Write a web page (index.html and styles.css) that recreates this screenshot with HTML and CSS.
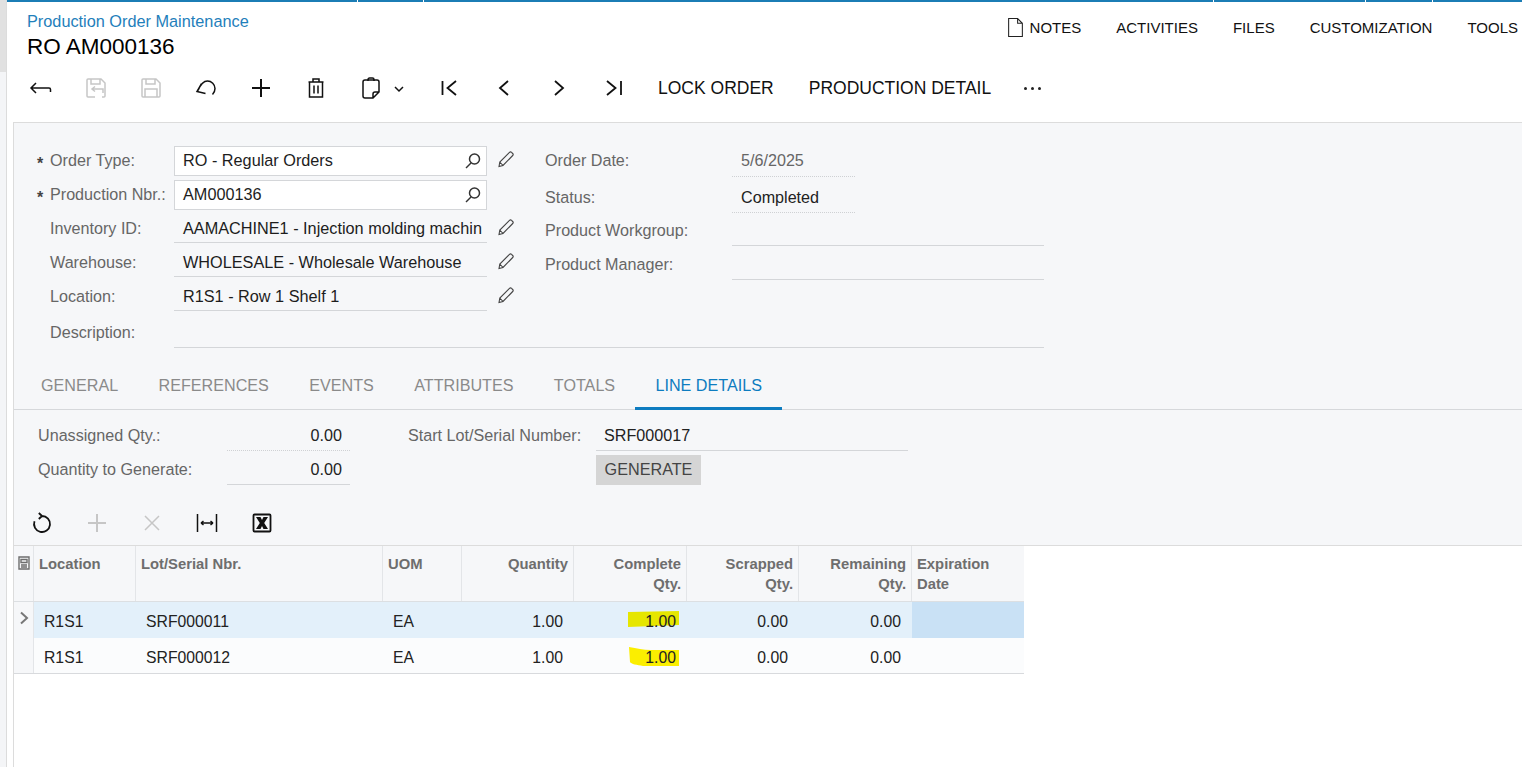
FILE: index.html
```html
<!DOCTYPE html>
<html lang="en">
<head>
<meta charset="utf-8">
<title>Production Order Maintenance</title>
<link rel="stylesheet" href="styles.css">
</head>
<body>
<div class="app">
  <div class="rail"><div class="rail-top"></div></div>
  <div class="main">
    <div class="topline"><i class="s1"></i><i class="s2"></i><i class="s3"></i><i class="s4"></i><i class="s5"></i><i class="s6"></i></div>
    <header class="head">
      <div class="titles">
        <div class="crumb">Production Order Maintenance</div>
        <div class="title">RO AM000136</div>
      </div>
      <nav class="links">
        <span class="link note-link"><svg class="note-ic" viewBox="0 0 16 18"><path d="M1.500 .5H10L14.500 5V17.500H1.500Z M10 .5V5H14.500"/></svg>NOTES</span>
        <span class="link">ACTIVITIES</span>
        <span class="link">FILES</span>
        <span class="link">CUSTOMIZATION</span>
        <span class="link">TOOLS</span>
      </nav>
    </header>
    <div class="toolbar">
      <span class="tb"><svg class="ic" viewBox="0 0 24 24"><path d="M7 7 2 12l5 5M2 12h18c1 0 1.500 .6 1.500 1.500V16"/></svg></span>
      <span class="tb off"><svg class="ic" viewBox="0 0 24 24"><path d="M9 21H4a1 1 0 0 1-1-1V4a1 1 0 0 1 1-1h13l4 4v13a1 1 0 0 1-1 1h-2M7 3v5h9V3M9 13h10v4M11 10.500l-3 2.500 3 2.500M8 21h3"/></svg></span>
      <span class="tb off"><svg class="ic" viewBox="0 0 24 24"><path d="M4 3h13l4 4v13a1 1 0 0 1-1 1H4a1 1 0 0 1-1-1V4a1 1 0 0 1 1-1ZM7 3v5h9V3M6 21v-8h12v8"/></svg></span>
      <span class="tb"><svg class="ic" viewBox="0 0 24 24"><path d="M7.500 7.500 3 15.500l8.500 2M4 14.500C6.500 8.500 9.500 5 13.500 5c4 0 7.500 3.500 7.500 7.500 0 2.500-1 4.500-2.500 6"/></svg></span>
      <span class="tb"><svg class="ic ic-b" viewBox="0 0 24 24"><path d="M12 3v18M3 12h18"/></svg></span>
      <span class="tb"><svg class="ic" viewBox="0 0 24 24"><path d="M4.500 6h15M9 6V3h6v3M5.500 6.500V21h13V6.500M10 9.500v8M14 9.500v8"/></svg></span>
      <span class="tb-split"><svg class="ic" viewBox="0 0 24 24"><path d="M9 5V3.500c0-.8.600-1.500 1.500-1.500h3c.9 0 1.500 .7 1.500 1.500V5M6 4h12c1 0 2 1 2 2v10l-6 6H6c-1 0-2-1-2-2V6c0-1 1-2 2-2ZM14 22v-4c0-1 1-2 2-2h4"/></svg><svg class="chev" viewBox="0 0 12 12"><path d="M2 4l4 4 4-4"/></svg></span>
      <span class="tb"><svg class="ic ic-t" viewBox="0 0 24 24"><path d="M5.500 5v14M19 5l-8.500 7 8.500 7"/></svg></span>
      <span class="tb"><svg class="ic ic-t" viewBox="0 0 24 24"><path d="M16 5l-8 7 8 7"/></svg></span>
      <span class="tb"><svg class="ic ic-t" viewBox="0 0 24 24"><path d="M8 5l8 7-8 7"/></svg></span>
      <span class="tb"><svg class="ic ic-t" viewBox="0 0 24 24"><path d="M19 5v14M5 5l8.500 7L5 19"/></svg></span>
      <span class="tbtext first">LOCK ORDER</span>
      <span class="tbtext">PRODUCTION DETAIL</span>
      <span class="more"><i></i><i></i><i></i></span>
    </div>

    <div class="content">
      <section class="panel">
        <div class="form">
          <div class="fcol-left">
            <div class="frow"><span class="star">*</span><label class="lbl">Order Type:</label><div class="field box">RO - Regular Orders<svg class="search" viewBox="0 0 18 18"><circle cx="10.500" cy="7" r="5"/><path d="M7 11 2 16"/></svg></div><svg class="pencil" viewBox="0 0 18 18"><path d="M2 16.500l.8-4.500L12.500 2.300c.6-.6 1.500-.6 2 0l1.200 1.200c.6.600.6 1.400 0 2L6 15.500ZM2.800 12 6 15.500"/></svg></div>
            <div class="frow"><span class="star">*</span><label class="lbl">Production Nbr.:</label><div class="field box">AM000136<svg class="search" viewBox="0 0 18 18"><circle cx="10.500" cy="7" r="5"/><path d="M7 11 2 16"/></svg></div></div>
            <div class="frow"><span class="star"></span><label class="lbl">Inventory ID:</label><div class="field line">AAMACHINE1 - Injection molding machin</div><svg class="pencil" viewBox="0 0 18 18"><path d="M2 16.500l.8-4.500L12.500 2.300c.6-.6 1.500-.6 2 0l1.200 1.200c.6.600.6 1.400 0 2L6 15.500ZM2.800 12 6 15.500"/></svg></div>
            <div class="frow"><span class="star"></span><label class="lbl">Warehouse:</label><div class="field line">WHOLESALE - Wholesale Warehouse</div><svg class="pencil" viewBox="0 0 18 18"><path d="M2 16.500l.8-4.500L12.500 2.300c.6-.6 1.500-.6 2 0l1.200 1.200c.6.600.6 1.400 0 2L6 15.500ZM2.800 12 6 15.500"/></svg></div>
            <div class="frow"><span class="star"></span><label class="lbl">Location:</label><div class="field line">R1S1 - Row 1 Shelf 1</div><svg class="pencil" viewBox="0 0 18 18"><path d="M2 16.500l.8-4.500L12.500 2.300c.6-.6 1.500-.6 2 0l1.200 1.200c.6.600.6 1.400 0 2L6 15.500ZM2.800 12 6 15.500"/></svg></div>
          </div>
          <div class="fcol-right">
            <div class="rrow"><label class="rlbl">Order Date:</label><div class="rval dotted muted">5/6/2025</div></div>
            <div class="rrow r2"><label class="rlbl">Status:</label><div class="rval dotted">Completed</div></div>
            <div class="rrow r3"><label class="rlbl">Product Workgroup:</label><div class="rval wide"></div></div>
            <div class="rrow r4"><label class="rlbl">Product Manager:</label><div class="rval wide"></div></div>
          </div>
        </div>
        <div class="desc"><span class="star"></span><label class="lbl">Description:</label><div class="desc-val"></div></div>

        <div class="tabs">
          <span class="tab">GENERAL</span>
          <span class="tab">REFERENCES</span>
          <span class="tab">EVENTS</span>
          <span class="tab">ATTRIBUTES</span>
          <span class="tab">TOTALS</span>
          <span class="tab active">LINE DETAILS</span>
        </div>

        <div class="ld">
          <div class="ld-a">
            <div class="ldrow"><label class="ld-lbl">Unassigned Qty.:</label><div class="ld-num dotted">0.00</div></div>
            <div class="ldrow"><label class="ld-lbl">Quantity to Generate:</label><div class="ld-num solid">0.00</div></div>
          </div>
          <div class="ld-b">
            <div class="ldrow"><label class="ld-lbl">Start Lot/Serial Number:</label><div class="ld-text">SRF000017</div></div>
            <div class="ldrow"><span class="ld-lbl"></span><span class="gen">GENERATE</span></div>
          </div>
        </div>

        <div class="gridbar">
          <span class="tb"><svg class="ic ic-t" viewBox="0 0 24 24"><path d="M12 5a8 8 0 1 1-7.500 5.300M12 5 8.800 2M12 5 8.800 8"/></svg></span>
          <span class="tb off"><svg class="ic ic-b" viewBox="0 0 24 24"><path d="M12 3v18M3 12h18"/></svg></span>
          <span class="tb off"><svg class="ic" viewBox="0 0 24 24"><path d="M5 5l14 14M19 5 5 19"/></svg></span>
          <span class="tb"><svg class="ic" viewBox="0 0 24 24"><path d="M2.500 3v18M21.500 3v18M6 12h12M6 12l2.500-2M6 12l2.500 2M18 12l-2.500-2M18 12l-2.500 2"/></svg></span>
          <span class="tb"><svg class="ic ic-t" viewBox="0 0 24 24"><rect x="3.500" y="3.500" width="17" height="17" rx="1"/><path class="xl" d="M6 6h4.500l1.500 3 1.500-3H18l-3.800 6 3.800 6h-4.500L12 15l-1.500 3H6l3.800-6Z"/></svg></span>
        </div>
      </section>

      <section class="grid">
        <div class="grow ghead">
          <div class="gc sel"><svg class="colic" viewBox="0 0 14 14"><path d="M2 1h10v12H2ZM4 3.500h6v3H4ZM4 9h6M4 11h6"/></svg></div>
          <div class="gc">Location</div>
          <div class="gc">Lot/Serial Nbr.</div>
          <div class="gc">UOM</div>
          <div class="gc r">Quantity</div>
          <div class="gc r">Complete<br>Qty.</div>
          <div class="gc r">Scrapped<br>Qty.</div>
          <div class="gc r">Remaining<br>Qty.</div>
          <div class="gc">Expiration<br>Date</div>
        </div>
        <div class="grow gbody row-a">
          <div class="gc sel"><svg class="rowarrow" viewBox="0 0 10 14"><path d="M2 1.500 8 7l-6 5.500"/></svg></div>
          <div class="gc">R1S1</div>
          <div class="gc">SRF000011</div>
          <div class="gc">EA</div>
          <div class="gc r">1.00</div>
          <div class="gc r hl-cell"><svg class="mark mark-a" viewBox="0 0 52 16"><path d="M1 1 52 0V14L1 16Z"/></svg>1.00</div>
          <div class="gc r">0.00</div>
          <div class="gc r">0.00</div>
          <div class="gc cur"></div>
        </div>
        <div class="grow gbody row-b">
          <div class="gc sel"></div>
          <div class="gc">R1S1</div>
          <div class="gc">SRF000012</div>
          <div class="gc">EA</div>
          <div class="gc r">1.00</div>
          <div class="gc r hl-cell"><svg class="mark mark-b" viewBox="0 0 50 19"><path d="M0 0C8 1 14 3 22 3H50V19H14C8 18 2 17 1 15Z"/></svg>1.00</div>
          <div class="gc r">0.00</div>
          <div class="gc r">0.00</div>
          <div class="gc"></div>
        </div>
      </section>
    </div>
  </div>
</div>
</body>
</html>
```
FILE: styles.css
```css
* { box-sizing: border-box; }
html, body { margin: 0; height: 767px; overflow: hidden; background: #fff; }
body { font-family: "Liberation Sans", Arial, sans-serif; font-size: 16.15px; color: #222; }
.app { display: flex; height: 767px; }
.rail { width: 7px; background: #f4f5f7; border-right: 1px solid #dcdcdc; flex: none; }
.rail-top { height: 72px; background: #e1e1e1; }
.main { flex: 1; min-width: 0; padding-left: 6px; display: flex; flex-direction: column; }

.topline { display: flex; gap: 1px; height: 2px; margin-left: -6px; flex: none; }
.topline i { display: block; background: #1b7db5; height: 100%; }
.s1 { width: 350px; } .s2 { width: 65px; } .s3 { width: 789px; }
.s4 { width: 151px; } .s5 { width: 66px; } .s6 { flex: 1; }

.head { display: flex; justify-content: space-between; height: 58px; padding-left: 14px; flex: none; }
.titles { padding-top: 10px; }
.crumb { font-size: 16.3px; line-height: 18px; color: #1f80bb; }
.title { font-size: 22.5px; line-height: 28px; color: #000; margin-top: 3px; }
.links { display: flex; gap: 35px; padding-top: 17px; padding-right: 4px; font-size: 15px; color: #111; }
.link { line-height: 17px; }
.note-link { display: flex; align-items: flex-start; gap: 6px; }
.note-ic { width: 17px; height: 19px; fill: none; stroke: #222; stroke-width: 1; margin-top: -1px; }

.toolbar { display: flex; align-items: center; height: 56px; margin-bottom: 6px; flex: none; }
.tb { width: 55px; flex: none; display: flex; justify-content: center; align-items: center; }
.tb-split { width: 78px; flex: none; display: flex; align-items: center; gap: 10px; padding-left: 16px; }
.ic { width: 24px; height: 24px; fill: none; stroke: #111; stroke-width: 1.500; flex: none; }
.ic-b { stroke-width: 2; }
.ic-t { stroke-width: 1.800; }
.xl { fill: #111; stroke: none; }
.off .ic { stroke: #c6c6c6; }
.chev { width: 12px; height: 12px; fill: none; stroke: #111; stroke-width: 1.500; margin-top: 2px; flex: none; }
.tbtext { font-size: 17.5px; line-height: 20px; color: #111; margin-left: 35px; }
.tbtext.first { margin-left: 17px; }
.more { display: flex; gap: 4px; margin-left: 33px; }
.more i { width: 3px; height: 3px; border-radius: 50%; background: #222; display: block; }

.content { flex: 1; border-left: 1px solid #dcdcdc; }
.panel { background: #f6f7f9; border-top: 1px solid #dcdcdc; border-bottom: 1px solid #dcdcdc; height: 424px; padding-top: 23px; }
.form { display: flex; }
.fcol-left { width: 531px; flex: none; }
.frow, .desc { display: flex; align-items: flex-start; padding-left: 23px; }
.frow { height: 34px; }
.star { width: 13px; flex: none; line-height: 36px; font-size: 16px; font-weight: bold; color: #444; }
.lbl { width: 124px; flex: none; line-height: 29px; color: #666; white-space: nowrap; }
.field { width: 313px; flex: none; padding-left: 9px; font-size: 16.25px; line-height: 29px; color: #1d1d1d; white-space: nowrap; overflow: hidden; }
.box { height: 30px; display: flex; justify-content: space-between; align-items: center; background: #fff; border: 1px solid #d4d6d9; padding: 0 4px 2px 8px; line-height: 26px; }
.line { height: 29px; border-bottom: 1px solid #d4d6d9; }
.search { width: 18px; height: 18px; fill: none; stroke: #333; stroke-width: 1.500; margin-top: 2px; }
.pencil { width: 18px; height: 18px; margin: 4px 0 0 10px; fill: none; stroke: #444; stroke-width: 1.100; flex: none; }

.rrow { display: flex; }
.rlbl { width: 187px; flex: none; color: #666; line-height: 28px; white-space: nowrap; }
.rval { height: 31px; line-height: 28px; padding-left: 9px; }
.r2 { margin-top: 5px; }
.r2 .rlbl, .r2 .rval { line-height: 31px; }
.r3 { margin-top: 1px; }
.r4 { margin-top: 2px; }
.r3 .rlbl, .r4 .rlbl { line-height: 32px; }
.dotted { width: 123px; border-bottom: 1px dotted #cfd1d4; }
.wide { width: 312px; height: 32px; border-bottom: 1px solid #d4d6d9; }
.muted { color: #666; }

.desc { height: 32px; }
.desc .lbl { line-height: 33px; }
.desc-val { width: 870px; height: 32px; border-bottom: 1px solid #d4d6d9; }

.tabs { display: flex; height: 48px; margin-top: 14px; padding-left: 7px; border-bottom: 1px solid #d6d8db; }
.tab { height: 48px; padding: 13.500px 20.200px 0; font-size: 16.15px; line-height: 18px; color: #8a8a8a; }
.tab:first-child { padding-left: 20px; }
.tab.active { color: #0d7cc0; border-bottom: 3px solid #0d7cc0; }

.ld { display: flex; padding: 10px 0 0 24px; }
.ld-a { width: 312px; flex: none; }
.ld-b { margin-left: 58px; }
.ldrow { display: flex; height: 34px; }
.ld-lbl { display: block; width: 189px; flex: none; color: #666; line-height: 31px; white-space: nowrap; }
.ld-b .ld-lbl { width: 188px; }
.ld-num { width: 123px; height: 31px; text-align: right; padding-right: 8px; line-height: 31px; }
.solid { border-bottom: 1px solid #d4d6d9; }
.ld-text { width: 312px; height: 31px; padding-left: 8px; line-height: 31px; border-bottom: 1px solid #d4d6d9; }
.gen { display: block; width: 105px; height: 30px; margin-top: 1px; background: #d5d5d5; color: #444; font-size: 16.2px; line-height: 29px; text-align: center; }

.gridbar { display: flex; align-items: center; height: 43px; margin-top: 13px; }

.grid { width: 1010px; }
.grow { display: grid; grid-template-columns: 20px 102px 247px 79px 112px 113px 112px 113px 112px; }
.ghead { height: 56px; background: #f6f7f9; border-bottom: 1px solid #dcdfe2; font-weight: bold; font-size: 14.8px; line-height: 20px; color: #6e6e6e; }
.ghead .gc { padding: 8px 5px 0; border-right: 1px solid #e3e5e8; }
.ghead .gc:last-child { border-right: 0; }
.ghead .sel { padding: 10px 0 0 3px; }
.colic { display: block; width: 14px; height: 14px; fill: none; stroke: #6e6e6e; stroke-width: 1.400; }
.r { text-align: right; }
.gbody { font-size: 15.75px; }
.gbody .gc { padding: 0 11px 0 10px; color: #222; line-height: 39px; }
.row-a { height: 36px; grid-template-rows: 36px; background: #e3f0fa; }
.row-b { height: 36px; grid-template-rows: 35px; background: #fbfcfd; border-bottom: 1px solid #d8dadd; }
.gbody .sel { padding: 0; background: #f6f7f9; border-right: 1px solid #e3e5e8; }
.rowarrow { display: block; width: 10px; height: 14px; margin: 9px 0 0 5px; fill: none; stroke: #777; stroke-width: 2; }
.gbody .cur { background: #c9e1f5; }
.hl-cell { position: relative; isolation: isolate; }
.mark { position: absolute; z-index: -1; }
.mark-a { width: 52px; height: 16px; top: 9px; right: 8px; fill: #e6e600; }
.mark-b { width: 50px; height: 19px; top: 9px; right: 8px; fill: #fbee00; }
```
